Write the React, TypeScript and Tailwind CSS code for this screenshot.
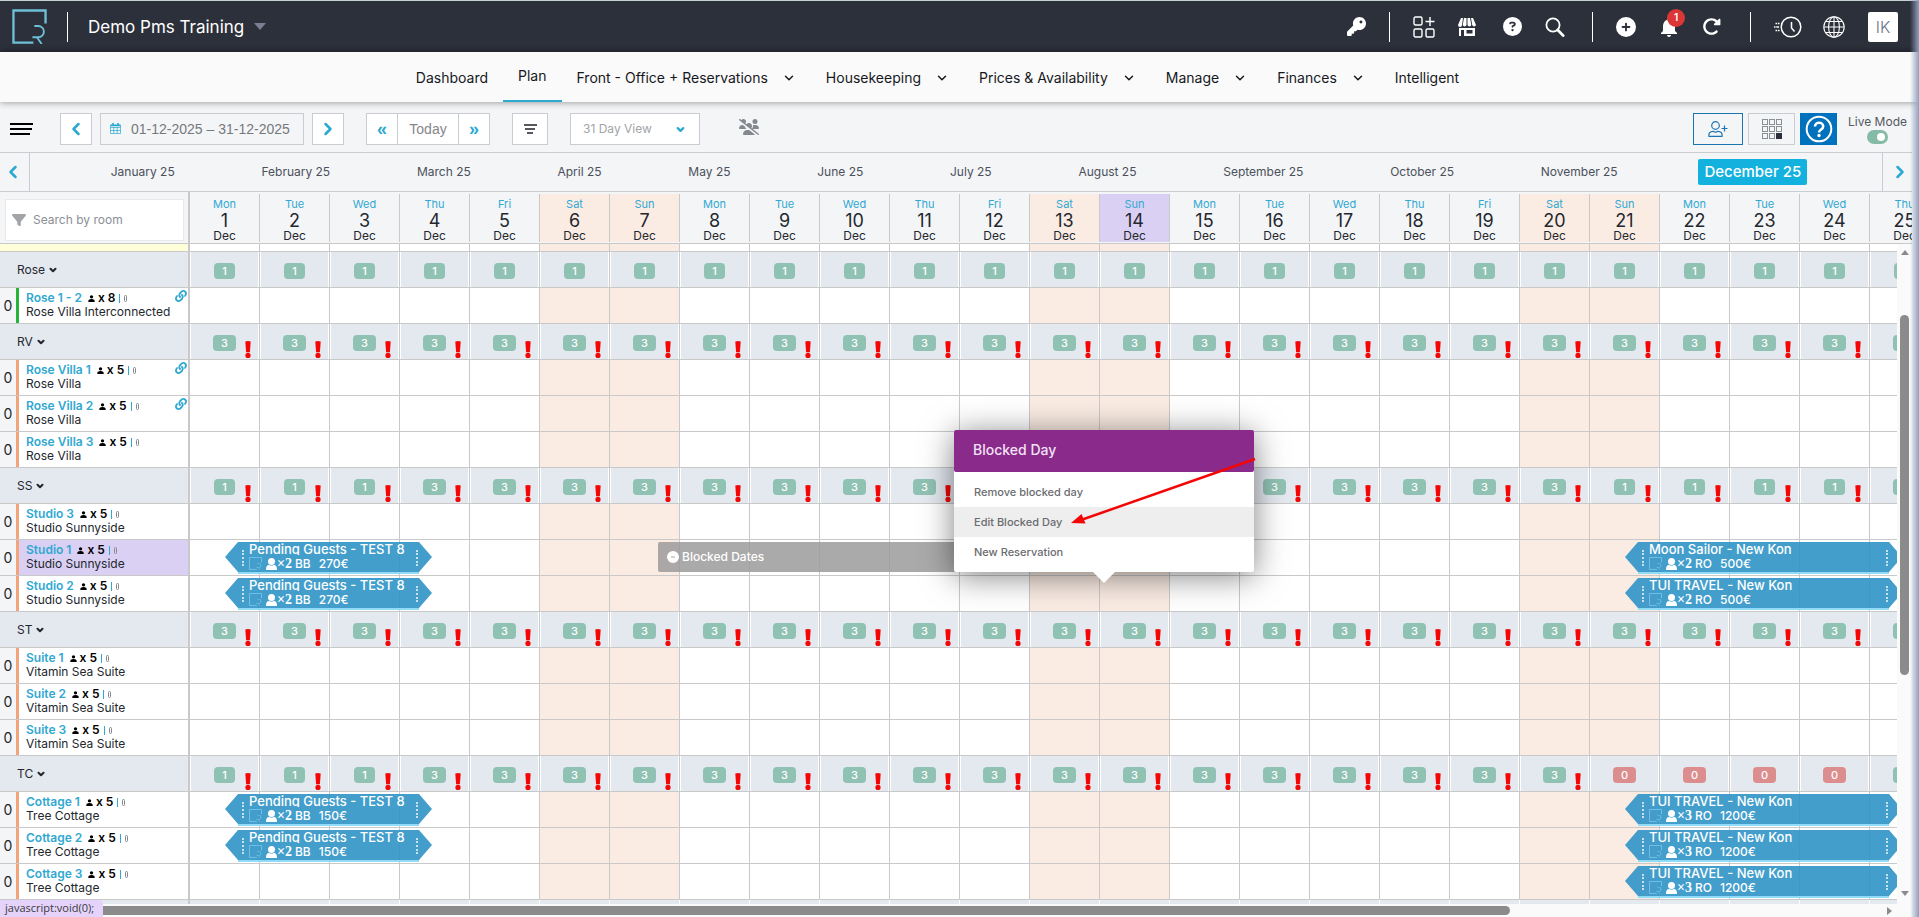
import React from "react"
import clsx from "clsx"
import {
  FaCircleMinus,
  FaCirclePlus,
  FaCircleQuestion,
  FaFilter,
  FaKey,
  FaRotateRight,
  FaUsersSlash,
} from "react-icons/fa6"
import { FaLink } from "react-icons/fa"
import { BsPersonFill } from "react-icons/bs"
import { MdNotifications } from "react-icons/md"
import { LuChevronDown, LuChevronLeft, LuChevronRight } from "react-icons/lu"

type Booking = {
  day: number
  nights: number
  title: string
  guests: number
  board: string
  price: string
}

type Room = {
  name: string
  type: string
  sleeps: number
  linked?: boolean
  green?: boolean
  selected?: boolean
  blocked?: boolean
  bookings?: Booking[]
}

type Group = {
  code: string
  warn: boolean
  free: (day: number) => number
  rooms: Room[]
}

const WEEKDAYS = ["Sun", "Mon", "Tue", "Wed", "Thu", "Fri", "Sat"]
const DAYS = Array.from({ length: 25 }, (_, i) => i + 1)
const TODAY = 14

const MONTHS = [
  "January 25",
  "February 25",
  "March 25",
  "April 25",
  "May 25",
  "June 25",
  "July 25",
  "August 25",
  "September 25",
  "October 25",
  "November 25",
  "December 25",
]

const NAV = [
  { label: "Dashboard" },
  { label: "Plan", active: true },
  { label: "Front - Office + Reservations", menu: true },
  { label: "Housekeeping", menu: true },
  { label: "Prices & Availability", menu: true },
  { label: "Manage", menu: true },
  { label: "Finances", menu: true },
  { label: "Intelligent" },
]

const pending = (price: string): Booking => ({
  day: 1,
  nights: 3,
  title: "Pending Guests - TEST 8",
  guests: 2,
  board: "BB",
  price,
})

const arrival = (title: string, guests: number, price: string): Booking => ({
  day: 21,
  nights: 4,
  title,
  guests,
  board: "RO",
  price,
})

const TUI = "TUI TRAVEL - New Kon"

const GROUPS: Group[] = [
  {
    code: "Rose",
    warn: false,
    free: () => 1,
    rooms: [
      {
        name: "Rose 1 - 2",
        type: "Rose Villa Interconnected",
        sleeps: 8,
        linked: true,
        green: true,
      },
    ],
  },
  {
    code: "RV",
    warn: true,
    free: () => 3,
    rooms: [
      { name: "Rose Villa 1", type: "Rose Villa", sleeps: 5, linked: true },
      { name: "Rose Villa 2", type: "Rose Villa", sleeps: 5, linked: true },
      { name: "Rose Villa 3", type: "Rose Villa", sleeps: 5 },
    ],
  },
  {
    code: "SS",
    warn: true,
    free: (d) => (d < 4 || (d > 20 && d < 25) ? 1 : 3),
    rooms: [
      { name: "Studio 3", type: "Studio Sunnyside", sleeps: 5 },
      {
        name: "Studio 1",
        type: "Studio Sunnyside",
        sleeps: 5,
        selected: true,
        blocked: true,
        bookings: [pending("270€"), arrival("Moon Sailor - New Kon", 2, "500€")],
      },
      {
        name: "Studio 2",
        type: "Studio Sunnyside",
        sleeps: 5,
        bookings: [pending("270€"), arrival(TUI, 2, "500€")],
      },
    ],
  },
  {
    code: "ST",
    warn: true,
    free: () => 3,
    rooms: [
      { name: "Suite 1", type: "Vitamin Sea Suite", sleeps: 5 },
      { name: "Suite 2", type: "Vitamin Sea Suite", sleeps: 5 },
      { name: "Suite 3", type: "Vitamin Sea Suite", sleeps: 5 },
    ],
  },
  {
    code: "TC",
    warn: true,
    free: (d) => (d < 4 ? 1 : d > 20 && d < 25 ? 0 : 3),
    rooms: [
      {
        name: "Cottage 1",
        type: "Tree Cottage",
        sleeps: 5,
        bookings: [pending("150€"), arrival(TUI, 3, "1200€")],
      },
      {
        name: "Cottage 2",
        type: "Tree Cottage",
        sleeps: 5,
        bookings: [pending("150€"), arrival(TUI, 3, "1200€")],
      },
      {
        name: "Cottage 3",
        type: "Tree Cottage",
        sleeps: 5,
        bookings: [arrival(TUI, 3, "1200€")],
      },
    ],
  },
]

const isWeekend = (day: number) => day % 7 === 6 || day % 7 === 0

const Logo = ({ className }: { className?: string }) => (
  <svg viewBox="0 0 36 36" fill="none" stroke="currentColor" className={className}>
    <path d="M22 34.5H1.5v-33h33V15" strokeWidth="2.4" />
    <path d="M23 17.5h4a5.800 5.800 0 0 1 0 11.600h-6" strokeWidth="1.9" />
    <path d="M26 29.500l4.500 6.500" strokeWidth="1.9" />
  </svg>
)

const AppsIcon = () => (
  <svg width="22" height="22" viewBox="0 0 22 22" fill="none" stroke="currentColor" strokeWidth="1.4">
    <rect x="1" y="1" width="8" height="8" rx="1.5" />
    <rect x="1" y="13" width="8" height="8" rx="1.5" />
    <rect x="13" y="13" width="8" height="8" rx="1.5" />
    <path d="M17 1v9M12.500 5.500h9" />
  </svg>
)

const StoreIcon = () => (
  <svg width="18" height="18" viewBox="0 0 18 18" fill="currentColor">
    <path d="M3 0h2L4 7a2 2 0 0 1-4 0zM6 0h2.500v7a2 2 0 0 1-3.800 0zM9.500 0H12l1.300 7a2 2 0 0 1-3.800 0zM13 0h2l3 7a2 2 0 0 1-3.800 0z" />
    <path
      fillRule="evenodd"
      d="M1 10h16v8H1zM3 12v6h3v-6zM8.500 12v3.500h6V12z"
    />
  </svg>
)

const SearchIcon = () => (
  <svg width="20" height="20" viewBox="0 0 20 20" fill="none" stroke="currentColor">
    <circle cx="8" cy="8" r="6.600" strokeWidth="1.800" />
    <path d="M12.800 13l5.400 5.600" strokeWidth="2.800" strokeLinecap="round" />
  </svg>
)

const RecentIcon = () => (
  <svg width="28" height="22" viewBox="0 0 28 22" fill="none" stroke="currentColor">
    <circle cx="17" cy="11" r="9.800" strokeWidth="1.500" />
    <path d="M17.500 6v6l3 3.500" strokeWidth="1.500" />
    <path d="M1.500 7.500h4M0 11h5M1.500 14.500h4" strokeWidth="1.600" strokeDasharray="1.500 .8 4" />
  </svg>
)

const GlobeIcon = () => (
  <svg width="22" height="22" viewBox="0 0 22 22" fill="none" stroke="currentColor" strokeWidth="1.100">
    <circle cx="11" cy="11" r="10.200" />
    <ellipse cx="11" cy="11" rx="5.400" ry="10.200" />
    <path d="M11 1v20M1 11h20M2.800 5.500h16.400M2.800 16.500h16.400" />
  </svg>
)

const CalendarIcon = () => (
  <svg width="11" height="11" viewBox="0 0 11 11" fill="none" stroke="currentColor">
    <path d="M.5 2h10v8.500H.5zM.5 4.500h10M.5 7.500h10M3.800 4v6.500M7.200 4v6.500" strokeWidth=".7" />
    <path d="M.5 2.500h10" strokeWidth="1.500" />
    <path d="M3 0v2M8 0v2" strokeWidth="1.600" />
  </svg>
)

const UserPlusIcon = () => (
  <svg width="20" height="16" viewBox="0 0 20 16" fill="none" stroke="currentColor" strokeWidth="1.200">
    <circle cx="7.500" cy="4.500" r="3.800" />
    <path d="M1 15.300c-.6-3 1.200-5 4-5 1.500.9 3.500.9 5 0 2.800 0 4.600 2 4 5z" />
    <path d="M16.500 4.500v6M13.500 7.500h6" />
  </svg>
)

const GridIcon = () => (
  <svg width="20" height="20" viewBox="0 0 20 20" fill="none">
    {[0, 7, 14].map((y) =>
      [0, 7, 14].map((x) => {
        const last = x === 14 && y === 14
        return (
          <rect
            key={`${x}-${y}`}
            x={x + 0.5}
            y={y + 0.5}
            width="5"
            height="5"
            fill={last ? "#2c303b" : "none"}
            stroke={last ? "#2c303b" : "#8b8f96"}
          />
        )
      })
    )}
  </svg>
)

const HelpIcon = () => (
  <svg width="28" height="28" viewBox="0 0 28 28" fill="none" stroke="currentColor">
    <circle cx="14" cy="14" r="12.300" strokeWidth="2" />
    <path d="M10 11.500c0-5 8.200-5 8.200 0 0 3-4.200 3-4.200 6" strokeWidth="2.600" />
    <circle cx="14" cy="20.500" r="1" strokeWidth="1.500" fill="currentColor" />
  </svg>
)

const GuestIcon = () => (
  <svg width="11" height="12" viewBox="0 0 11 12" fill="currentColor">
    <circle cx="5.500" cy="3.500" r="3.500" />
    <path d="M0 12c0-3.500 1-5 3-5 1.500.8 3.500.8 5 0 2 0 3 1.500 3 5z" />
  </svg>
)

const WarningIcon = () => (
  <svg
    width="6"
    height="17"
    viewBox="0 0 6 17"
    fill="#f40606"
    className="absolute bottom-px right-2"
  >
    <path d="M.3.5q2.700-.8 5.400 0L4.900 11.300H1.100z" />
    <circle cx="3" cy="14.400" r="2.600" />
  </svg>
)

const Separator = ({ className }: { className?: string }) => (
  <span className={clsx("h-[30px] w-px bg-white", className)} />
)

const TopBar = () => (
  <header className="flex h-[52px] items-center border-t border-[#c5d0d3] bg-[#2c303b] pl-3 pr-[21px] text-white">
    <a href="#" aria-label="Home" className="text-[#6dc0d6]">
      <Logo className="size-[35px]" />
    </a>
    <Separator className="ml-5" />
    <button type="button" className="ml-5 flex items-center gap-[10px] text-[17px] leading-6">
      Demo Pms Training
      <span className="border-x-[6px] border-t-[7px] border-x-transparent border-t-[#7b7f93]" />
    </button>
    <div className="ml-auto flex items-center gap-[23px]">
      <button type="button" aria-label="Access">
        <FaKey size={19} />
      </button>
      <Separator />
      <button type="button" aria-label="Apps">
        <AppsIcon />
      </button>
      <button type="button" aria-label="Store">
        <StoreIcon />
      </button>
      <button type="button" aria-label="Help" className="ml-1">
        <FaCircleQuestion size={19} />
      </button>
      <button type="button" aria-label="Search">
        <SearchIcon />
      </button>
      <Separator className="ml-1" />
      <button type="button" aria-label="Add">
        <FaCirclePlus size={20} />
      </button>
      <button type="button" aria-label="Notifications" className="relative -mx-0.5">
        <MdNotifications size={24} />
        <span className="absolute -top-1.5 left-2.5 flex size-[18px] items-center justify-center rounded-full bg-[#dc3636] text-[10px] font-semibold">
          1
        </span>
      </button>
      <button type="button" aria-label="Refresh">
        <FaRotateRight size={19} />
      </button>
      <Separator className="ml-1.5" />
      <button type="button" aria-label="Recent">
        <RecentIcon />
      </button>
      <button type="button" aria-label="Language" className="-ml-0.5">
        <GlobeIcon />
      </button>
      <button
        type="button"
        className="size-[30px] rounded-xs bg-white text-base font-light text-[#6b7183]"
      >
        IK
      </button>
    </div>
  </header>
)

const MainNav = () => (
  <nav className="relative z-10 flex h-[50px] justify-center bg-[#fafafa] pr-11 text-sm text-[#16181d] shadow-[0_0_7px_rgba(0,0,0,0.45)]">
    {NAV.map((item) => (
      <a
        key={item.label}
        href="#"
        className={clsx(
          "flex items-center px-[15px]",
          item.active ? "border-b-2 border-[#2ba9d0]" : "pt-0.5"
        )}
      >
        {item.label}
        {item.menu && <LuChevronDown size={14} strokeWidth={2.5} className="ml-[14px]" />}
      </a>
    ))}
  </nav>
)

const toolButton =
  "flex h-8 items-center justify-center border border-[#c9ccd0] bg-white text-[#2ba9d0]"

const Toolbar = () => (
  <div className="mr-[7px] flex h-[51px] items-center border-b border-[#c9ccd0] pl-[10px] pt-[3px]">
    <button type="button" aria-label="Menu" className="flex w-6 flex-col gap-[3px]">
      <span className="h-0.5 w-[23px] bg-black" />
      <span className="h-0.5 w-[22px] bg-black" />
      <span className="h-0.5 w-[20px] bg-black" />
    </button>
    <button type="button" aria-label="Previous" className={clsx(toolButton, "ml-[26px] w-8")}>
      <LuChevronLeft size={20} strokeWidth={3} />
    </button>
    <button
      type="button"
      className="ml-2 flex h-8 w-[204px] items-center gap-[10px] border border-[#c9ccd0] px-[9px] font-['Liberation_Sans',sans-serif] text-sm text-[#77797d]"
    >
      <span className="text-[#2ba9d0]">
        <CalendarIcon />
      </span>
      01-12-2025 – 31-12-2025
    </button>
    <button type="button" aria-label="Next" className={clsx(toolButton, "ml-2 w-8")}>
      <LuChevronRight size={20} strokeWidth={3} />
    </button>
    <div className="ml-[22px] flex font-['Liberation_Sans',sans-serif]">
      <button type="button" className={clsx(toolButton, "w-8 text-lg font-bold")}>
        «
      </button>
      <button
        type="button"
        className="h-8 w-[60px] border-y border-[#c9ccd0] bg-white text-sm text-[#85878b]"
      >
        Today
      </button>
      <button type="button" className={clsx(toolButton, "w-8 text-lg font-bold")}>
        »
      </button>
    </div>
    <button
      type="button"
      aria-label="Filter"
      className={clsx(toolButton, "ml-[22px] w-9 flex-col gap-[2px]")}
    >
      <span className="h-0.5 w-[13px] bg-[#55585e]" />
      <span className="h-0.5 w-[10px] bg-[#55585e]" />
      <span className="h-0.5 w-[6px] bg-[#55585e]" />
    </button>
    <div className="relative ml-[22px]">
      <select
        aria-label="View"
        className="h-8 w-[130px] appearance-none border border-[#c9ccd0] bg-white pl-3 text-xs text-[#a2a4a8]"
      >
        <option>31 Day View</option>
      </select>
      <LuChevronDown
        size={11}
        strokeWidth={5}
        className="absolute right-[14px] top-[11px] text-[#2ba9d0]"
      />
    </div>
    <button type="button" aria-label="Hide guests" className="mb-1 ml-[39px] text-[#85898f]">
      <FaUsersSlash size={20} />
    </button>
    <div className="ml-auto flex items-center pr-[5px]">
      <button
        type="button"
        aria-label="Add guest"
        className="flex h-8 w-[50px] items-center justify-center border border-[#1a74b0] text-[#1a74b0]"
      >
        <UserPlusIcon />
      </button>
      <button
        type="button"
        aria-label="Layout"
        className="ml-[5px] flex h-8 w-[47px] items-center justify-center border border-[#c9ccd0]"
      >
        <GridIcon />
      </button>
      <button
        type="button"
        aria-label="Guide"
        className="ml-[5px] flex h-8 w-[37px] items-center justify-center bg-[#0071bc] text-white"
      >
        <HelpIcon />
      </button>
      <label className="relative ml-[11px] flex flex-col items-center text-xs leading-4 text-[#55585e]">
        Live Mode
        <input type="checkbox" defaultChecked className="peer sr-only" />
        <span className="flex h-[14px] w-[21px] items-center justify-end rounded-full bg-[#85bba6] pr-[3px]">
          <span className="size-2 rounded-full bg-white" />
        </span>
      </label>
    </div>
  </div>
)

const MonthBar = () => (
  <div className="mr-[7px] flex h-[39px] border-b border-[#c9ccd0]">
    <button
      type="button"
      aria-label="Previous year"
      className="flex w-[30px] items-center justify-center border-r border-[#c9ccd0] pr-1 text-[#2ba9d0]"
    >
      <LuChevronLeft size={20} strokeWidth={3} />
    </button>
    <div className="flex flex-1 items-center justify-evenly">
      {MONTHS.map((month) => (
        <button
          key={month}
          type="button"
          className={clsx(
            "px-1.5",
            month === "December 25"
              ? "h-[26px] rounded-xs bg-[#13b1de] text-[15px] font-medium text-white"
              : "text-xs text-[#4c505a]"
          )}
        >
          {month}
        </button>
      ))}
    </div>
    <button
      type="button"
      aria-label="Next year"
      className="flex w-[30px] items-center justify-center border-l border-[#c9ccd0] pl-1 text-[#2ba9d0]"
    >
      <LuChevronRight size={20} strokeWidth={3} />
    </button>
  </div>
)

const BookingBar = ({ booking }: { booking: Booking }) => {
  return (
    <div
      className="absolute left-[35px] top-0.5 z-10 h-8 text-white"
      style={{ width: booking.nights * 70 - 3 }}
    >
      <div className="h-[30px] bg-[#2f94c7]/90 pl-6 [clip-path:polygon(0_50%,13px_0,calc(100%-13px)_0,100%_50%,calc(100%-13px)_100%,13px_100%)]">
        <p className="h-[13px] overflow-hidden whitespace-nowrap text-[13px] font-medium leading-[15px]">
          {booking.title}
        </p>
        <div className="flex h-[17px] items-center whitespace-nowrap text-xs leading-4">
          <Logo className="size-[13px] text-[#8fd6f5]/70" />
          <span className="ml-1">
            <GuestIcon />
          </span>
          <b className="font-['Liberation_Serif',serif] text-sm leading-4">
            ×{booking.guests}
          </b>
          <span className="ml-[3px] font-medium">{booking.board}</span>
          <span className="ml-2 font-medium">{booking.price}</span>
        </div>
      </div>
      <div className="mx-[13px] h-0.5 bg-[#90dbf8]" />
      <span className="absolute left-[17px] top-2 h-4 border-l-2 border-dotted border-white/70" />
      <span className="absolute right-[14px] top-2 h-4 border-l-2 border-dotted border-white/70" />
    </div>
  )
}

const BlockedMenu = () => (
  <div className="absolute -left-[146px] -top-[110px] z-30 h-[142px] w-[300px] rounded-xs bg-white text-xs text-[#6a6c70] shadow-[0_4px_32px_rgba(0,0,0,0.5)]">
    <div className="flex h-[42px] items-center rounded-xs bg-[#8a2a8b] pb-0.5 pl-[19px] text-sm font-medium text-[#f3e3f5]">
      Blocked Day
    </div>
    <ul className="pt-[5px] text-left">
      {["Remove blocked day", "Edit Blocked Day", "New Reservation"].map((action) => (
        <li key={action}>
          <button
            type="button"
            className={clsx(
              "h-[30px] w-full pl-5 text-left text-[11px] font-medium",
              action === "Edit Blocked Day" && "bg-[#eeeeee]"
            )}
          >
            {action}
          </button>
        </li>
      ))}
    </ul>
    <span className="absolute left-[139px] top-full border-x-[11px] border-t-[11px] border-x-transparent border-t-white" />
    <svg width="304" height="142" className="absolute left-0 top-0" aria-hidden="true">
      <path d="M301 29 127 90" stroke="#f40606" strokeWidth="2.500" />
      <path d="M117 93l10.500-9 4 9.500z" fill="#f40606" />
    </svg>
  </div>
)

const GroupRow = ({ group }: { group: Group }) => (
  <tr className="bg-[#e4e9f0]">
    <th
      scope="row"
      className="h-9 border-b border-r-2 border-[#c9c9c9] pl-[17px] text-left text-xs font-normal text-[#24272e]"
    >
      <button type="button" className="flex items-center gap-[3px]">
        {group.code}
        <LuChevronDown size={10} strokeWidth={5} />
      </button>
    </th>
    {DAYS.map((day) => {
      const free = group.free(day)
      return (
        <td
          key={day}
          className="relative border-b border-r border-[#c9c9c9] p-0 shadow-[inset_1px_0_0_#fff,inset_-1px_0_0_#fff]"
        >
          <span
            className={clsx(
              "mx-auto mt-0.5 block h-4 w-fit rounded-sm px-2 text-[11px] font-medium leading-4 text-white",
              free > 0 ? "bg-[#90c2b3]" : "bg-[#dc8e8e]"
            )}
          >
            {free}
          </span>
          {group.warn && free > 0 && <WarningIcon />}
        </td>
      )
    })}
  </tr>
)

const RoomRow = ({ room }: { room: Room }) => (
  <tr>
    <th
      scope="row"
      className="h-9 border-b border-r-2 border-[#c9c9c9] p-0 text-left font-normal"
    >
      <div className="flex h-[35px]">
        <span className="flex w-4 items-center justify-center bg-[#f3f5f7] text-sm text-[#24272e]">
          0
        </span>
        <div
          className={clsx(
            "relative flex-1 border-l-[3px] pl-[7px] pt-[3px] text-xs leading-[14px]",
            room.green ? "border-[#26b33a]" : "border-[#f2a47a]",
            room.selected && "bg-[#d9d0f3]"
          )}
        >
          <p className="flex items-center font-semibold">
            <span className="text-[#31a8d2]">{room.name}</span>
            <BsPersonFill size={9} className="ml-[5px] text-black" />
            <span className="ml-0.5 text-black">x {room.sleeps}</span>
            <span className="ml-1 h-[9px] w-px bg-[#31a8d2]" />
            <span className="ml-1 h-[7px] w-[3px] rounded-full border border-[#85898f]" />
          </p>
          <p className="whitespace-nowrap text-[#24272e]">{room.type}</p>
          {room.linked && (
            <FaLink size={12} className="absolute right-px top-0.5 text-[#31a8d2]" />
          )}
        </div>
      </div>
    </th>
    {DAYS.map((day) => {
      const booking = room.bookings?.find((b) => b.day === day)
      return (
        <td
          key={day}
          className={clsx(
            "relative border-b border-r border-[#c9c9c9]",
            isWeekend(day) && "bg-[#faece3]"
          )}
        >
          {booking && <BookingBar booking={booking} />}
          {room.blocked && day === 7 && (
            <div className="absolute left-12 top-0.5 z-10 flex h-[30px] w-[487px] items-center gap-[3px] rounded-xs bg-[#9b9b9b]/85 pl-[9px] text-xs font-medium text-white">
              <FaCircleMinus size={12} />
              Blocked Dates
            </div>
          )}
          {room.blocked && day === TODAY && <BlockedMenu />}
        </td>
      )
    })}
  </tr>
)

const Columns = () => (
  <colgroup>
    <col className="w-[190px]" />
    {DAYS.map((day) => (
      <col key={day} className="w-[70px]" />
    ))}
  </colgroup>
)

const plannerTable = "w-[1940px] table-fixed border-separate border-spacing-0"

const DayHeader = () => (
  <table className={plannerTable}>
    <Columns />
    <thead>
      <tr>
        <th className="h-[52px] border-b border-r-2 border-[#c9c9c9] p-0 pl-[5px] pr-1 pt-1 font-normal">
          <div className="flex h-[42px] items-center gap-[7px] border border-[#e7e9ec] bg-white pl-1.5">
            <FaFilter size={14} className="shrink-0 text-[#a2a4a8]" />
            <input
              type="text"
              aria-label="Search by room"
              placeholder="Search by room"
              className="w-full min-w-0 text-xs text-[#24272e] outline-none placeholder:text-[#8b8f96]"
            />
          </div>
        </th>
        {DAYS.map((day) => (
          <th
            key={day}
            scope="col"
            className="h-[52px] border-b border-[#c9c9c9] p-0 pt-0.5 align-top font-normal"
          >
            <div
              className={clsx(
                "h-12 border-r border-[#c9c9c9] pt-[3px]",
                day === TODAY ? "bg-[#d9d0f3]" : isWeekend(day) && "bg-[#faece3]"
              )}
            >
              <p className="text-[11px] leading-[14px] text-[#31a8d2]">
                {WEEKDAYS[day % 7]}
              </p>
              <p className="text-lg leading-[19px] text-[#24272e]">{day}</p>
              <p className="text-xs leading-[12px] text-[#24272e]">Dec</p>
            </div>
          </th>
        ))}
      </tr>
    </thead>
  </table>
)

const Planner = () => (
  <table className={plannerTable}>
    <Columns />
    <tbody>
      <tr>
        <td className="h-2 border-b border-r-2 border-[#c9c9c9] bg-[#feffd8] p-0" />
        {DAYS.map((day) => (
          <td
            key={day}
            className={clsx(
              "border-b border-r border-[#c9c9c9] p-0",
              isWeekend(day) && "bg-[#faece3]"
            )}
          />
        ))}
      </tr>
      {GROUPS.map((group) => (
        <React.Fragment key={group.code}>
          <GroupRow group={group} />
          {group.rooms.map((room) => (
            <RoomRow key={room.name} room={room} />
          ))}
        </React.Fragment>
      ))}
      <tr className="bg-[#e4e9f0]">
        <td className="h-9 border-r-2 border-[#c9c9c9]" />
        {DAYS.map((day) => (
          <td key={day} className="border-r border-white" />
        ))}
      </tr>
    </tbody>
  </table>
)

const App = () => {
  return (
    <div className="relative flex h-screen flex-col overflow-hidden bg-[#f3f5f7] font-['Inter',sans-serif]">
      <TopBar />
      <MainNav />
      <Toolbar />
      <MonthBar />
      <div className="mr-[7px] shrink-0 overflow-hidden">
        <DayHeader />
      </div>
      <main className="mr-[7px] flex min-h-0 flex-1">
        <div className="min-w-0 flex-1 overflow-hidden bg-white">
          <Planner />
        </div>
        <div className="flex w-[15px] flex-col items-center bg-[#fafafa]">
          <span className="mt-1.5 border-x-4 border-b-[5px] border-x-transparent border-b-[#8b8b8b]" />
          <span className="mt-[60px] h-[360px] w-[9px] rounded-full bg-[#8b8b8b]" />
          <span className="mb-2 mt-auto border-x-4 border-t-[5px] border-x-transparent border-t-[#8b8b8b]" />
        </div>
      </main>
      <div className="mr-[7px] flex h-[13px] items-center bg-[#fafafa]">
        <span className="h-[9px] w-[79%] rounded-full bg-[#8b8b8b]" />
        <span className="ml-auto mr-5 border-y-4 border-l-[5px] border-y-transparent border-l-[#8b8b8b]" />
      </div>
      <div className="absolute bottom-0 left-0 z-20 flex h-[17px] w-[103px] items-center rounded-tr-sm bg-[#e5d3fb] pl-[5px] font-['Open_Sans',sans-serif] text-[11px] text-[#3b3b3b]">
        javascript:void(0);
      </div>
      <div className="absolute inset-y-0 right-0 z-20 w-[9px] bg-linear-to-r from-transparent to-[#8fa0bd]" />
    </div>
  )
}

export default App
